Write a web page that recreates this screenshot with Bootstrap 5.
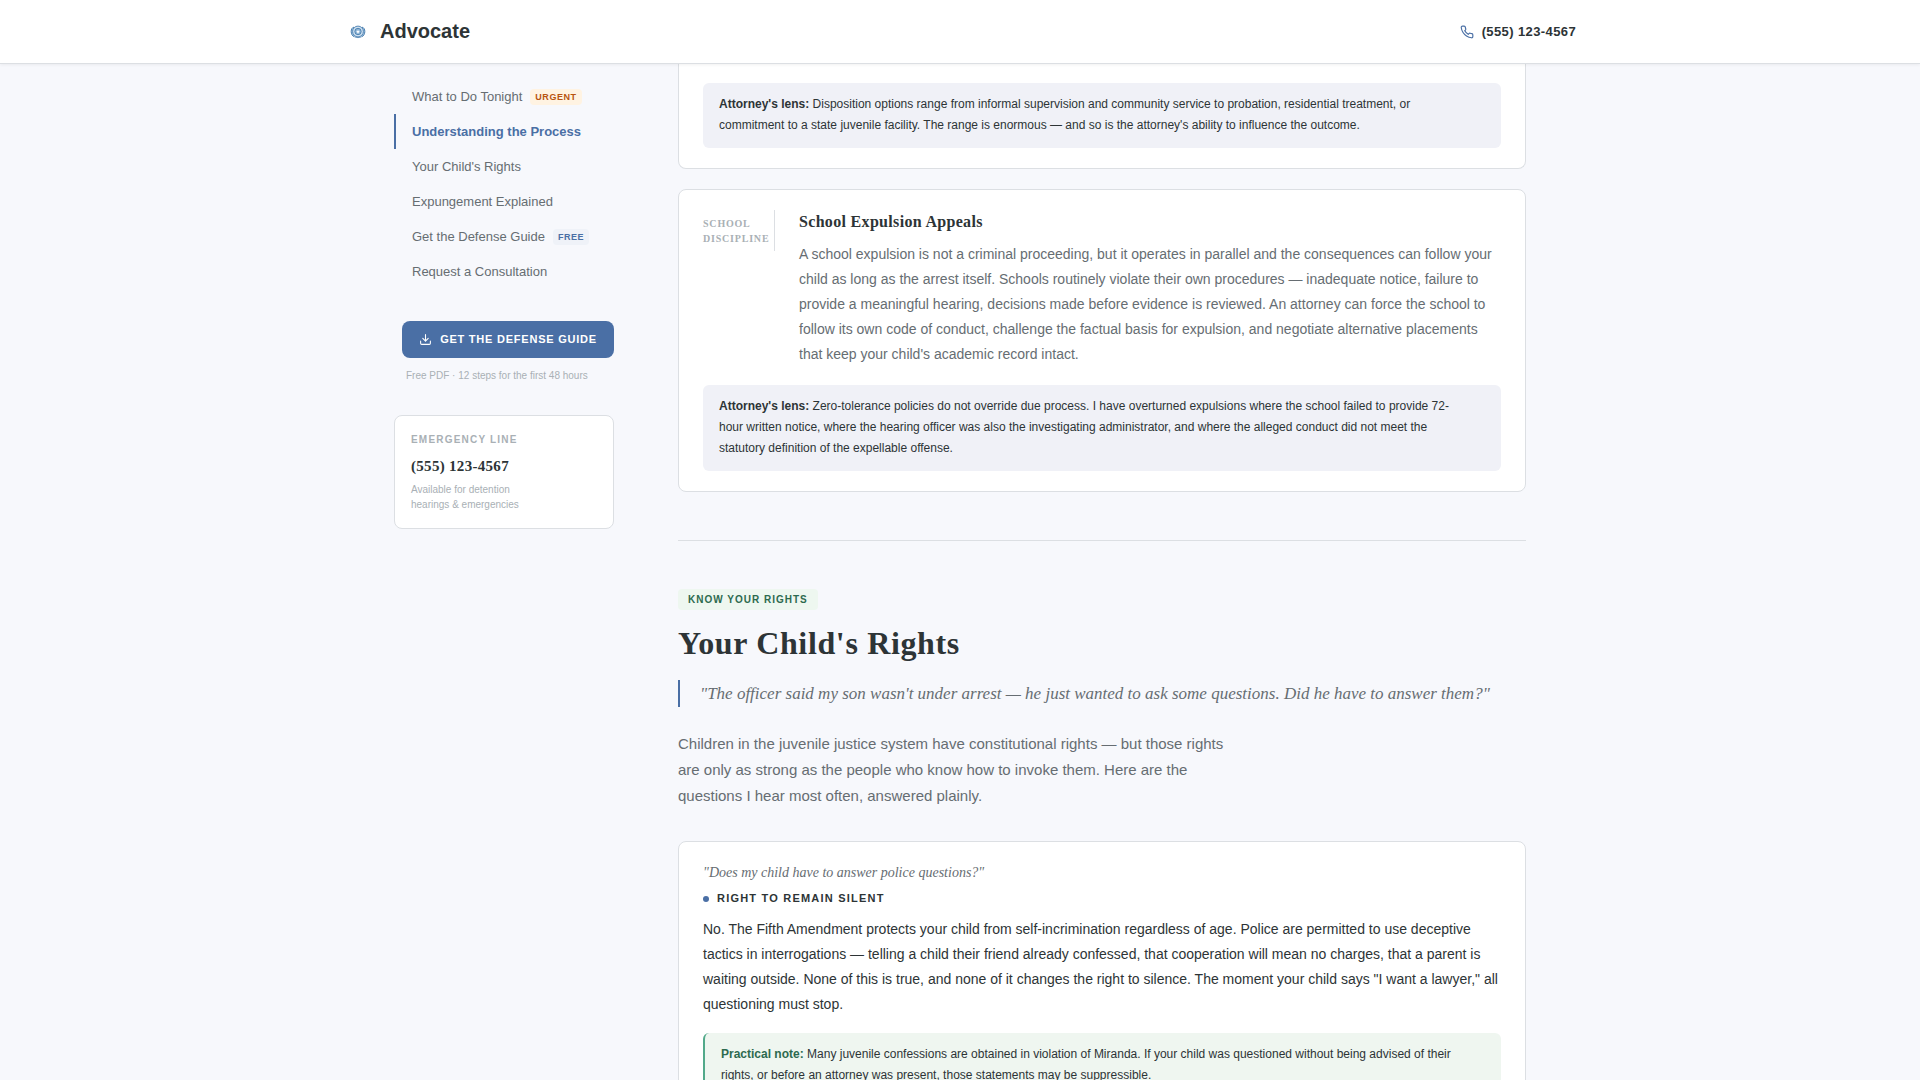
<!DOCTYPE html>
<html lang="en">
<head>
<meta charset="utf-8">
<meta name="viewport" content="width=device-width, initial-scale=1">
<title>Advocate</title>
<link href="https://cdn.jsdelivr.net/npm/bootstrap@5.3.0/dist/css/bootstrap.min.css" rel="stylesheet">
<style>
:root{--ink:#2d3436;--muted:#666d72;--faint:#a9b0b5;--blue:#4a6fa5;--line:#dcdfe3;--serif:"Liberation Serif","Times New Roman",serif}
body{background:#f7f8fc;color:var(--ink);font-family:"Liberation Sans",Arial,sans-serif;font-size:14px;line-height:25px}
.topbar{height:64px;background:#fff;border-bottom:1px solid var(--line);box-shadow:0 1px 3px rgba(0,0,0,.06)}
.topbar-inner{max-width:1280px}
.shell{max-width:1180px}
.brand{font-size:20px;font-weight:700}
.tel{font-size:13px;font-weight:700;letter-spacing:.03em}
a{color:inherit;text-decoration:none}
.side{width:220px;flex:none;padding-top:15px}
.side .nav-link{font-size:13px;line-height:19px;padding:8px 16px;border-left:2px solid transparent;color:var(--muted)}
.side .nav-link.active{border-color:var(--blue);color:var(--blue);font-weight:700}
.tag{font-size:9px;line-height:12px;font-weight:700;letter-spacing:.06em;padding:2px 5px;border-radius:4px}
.tag-urgent{background:#fff3e2;color:#b85410}
.tag-free{background:#eff2f8;color:var(--blue)}
.guide{margin:32px 0 0 8px;height:37px;background:var(--blue);color:#fff;font-size:11px;font-weight:700;letter-spacing:.07em;border-radius:8px;padding:0 16px}
.guide:hover{background:#3f6192;color:#fff}
.tiny{font-size:10px;line-height:15px;color:var(--faint)}
.guide-note{margin:10px 0 0 12px}
.panel{background:#fff;border:1px solid var(--line);border-radius:8px}
.hotline{margin-top:32px;padding:16px}
.eyebrow{font-size:10px;line-height:15px;font-weight:700;letter-spacing:.12em;color:var(--faint)}
.hotline-number{font:700 15px/24px var(--serif);letter-spacing:.02em;margin-top:7px}
.panel-body{padding:20px 24px}
.panel-cont{padding-top:19px}
.panel-gap{margin-top:20px}
.lens,.practical{font-size:12px;line-height:21px;padding:11px 16px 12px;border-radius:6px}
.lens{background:#f0f1f7}
.lens-gap{margin-top:18px}
.practical{background:#eff6f0;border-left:2px solid #52a98a}
.practical strong,.rights-tag{color:#2d6a4f}
.stage{width:72px;flex:none;align-self:flex-start;padding:6px 0 5px;border-right:1px solid var(--line);font:700 10px/15px var(--serif);letter-spacing:.08em;color:var(--faint)}
.panel h3{font:700 16px/24px var(--serif);letter-spacing:.02em}
.copy{color:var(--muted)}
.rule{border-top:1px solid var(--line);margin:48px 0}
.rights-tag{background:#eef7f0;font-size:10px;line-height:15px;font-weight:700;letter-spacing:.1em;padding:3px 10px;border-radius:4px}
h2{font:700 32px/42px var(--serif);letter-spacing:.02em;margin:12px 0 16px}
.pull{font:italic 17px/27px var(--serif);color:var(--muted);border-left:2px solid var(--blue);padding-left:20px}
.intro{font-size:15px;line-height:26px;color:var(--muted);max-width:560px;margin-bottom:32px}
.ask{font:italic 14px/22px var(--serif);color:var(--muted)}
.right-name{font-size:11px;line-height:17px;font-weight:700;letter-spacing:.11em;margin:6px 0 10px}
.dot{width:6px;height:6px;border-radius:50%;background:var(--blue)}
</style>
</head>
<body>
<header class="topbar sticky-top">
  <div class="topbar-inner container-fluid px-4 h-100 d-flex align-items-center justify-content-between">
    <a href="#" class="d-flex align-items-center gap-2">
      <svg width="28" height="28" viewBox="0 0 28 28" fill="none" stroke="#4a7fb0" aria-hidden="true">
        <path d="M10 9.200C6.200 9.500 6.200 17.500 10.300 18.700M18 9.200C21.800 9.500 21.800 17.500 17.700 18.700" fill="#a9c8e2"/>
        <circle cx="14" cy="13.500" r="5.400" fill="#cfe0ef" stroke-width=".9"/>
        <circle cx="14" cy="13.500" r="3.200" fill="#8fb5d6" stroke-width=".9"/>
        <path d="M12.800 13h2.400L14 15.200z" fill="#fff" stroke="#fff" stroke-width=".6"/>
        <path d="M10.500 18.700c2 1.200 5 1.200 7 0" stroke-width=".8"/>
      </svg>
      <span class="brand">Advocate</span>
    </a>
    <a href="tel:5551234567" class="tel d-flex align-items-center gap-2">
      <svg width="14" height="14" viewBox="0 0 24 24" fill="none" stroke="#4a6fa5" stroke-width="2" stroke-linecap="round" stroke-linejoin="round" aria-hidden="true"><path d="M22 16.920v3a2 2 0 0 1-2.180 2 19.790 19.790 0 0 1-8.630-3.070 19.500 19.500 0 0 1-6-6 19.790 19.790 0 0 1-3.070-8.670A2 2 0 0 1 4.110 2h3a2 2 0 0 1 2 1.720c.127.960.361 1.903.700 2.810a2 2 0 0 1-.450 2.110L8.090 9.910a16 16 0 0 0 6 6l1.270-1.270a2 2 0 0 1 2.110-.450c.907.339 1.850.573 2.810.700A2 2 0 0 1 22 16.920z"/></svg>
      (555) 123-4567
    </a>
  </div>
</header>

<div class="shell container-fluid px-4 d-flex">
  <aside class="side">
    <nav class="nav flex-column" aria-label="Guide sections">
      <a class="nav-link d-flex align-items-center gap-2" href="#tonight">What to Do Tonight <span class="tag tag-urgent">URGENT</span></a>
      <a class="nav-link active" aria-current="true" href="#process">Understanding the Process</a>
      <a class="nav-link" href="#rights">Your Child's Rights</a>
      <a class="nav-link" href="#expungement">Expungement Explained</a>
      <a class="nav-link d-flex align-items-center gap-2" href="#guide">Get the Defense Guide <span class="tag tag-free">FREE</span></a>
      <a class="nav-link" href="#consult">Request a Consultation</a>
    </nav>
    <div class="d-flex flex-column">
      <button type="button" class="guide btn border-0 d-flex align-items-center justify-content-center gap-2">
        <svg width="13" height="13" viewBox="0 0 24 24" fill="none" stroke="#fff" stroke-width="2" stroke-linecap="round" stroke-linejoin="round" aria-hidden="true"><path d="M21 15v4a2 2 0 0 1-2 2H5a2 2 0 0 1-2-2v-4M7 10l5 5 5-5M12 15V3"/></svg>
        GET THE DEFENSE GUIDE
      </button>
      <div class="tiny guide-note">Free PDF · 12 steps for the first 48 hours</div>
    </div>
    <div class="panel hotline">
      <div class="eyebrow">EMERGENCY LINE</div>
      <a class="hotline-number d-block" href="tel:5551234567">(555) 123-4567</a>
      <div class="tiny mt-1">Available for detention<br>hearings &amp; emergencies</div>
    </div>
  </aside>

  <main class="flex-grow-1 ms-5 ps-3">
    <article class="panel panel-body panel-cont border-top-0 rounded-top-0" id="process">
      <div class="lens"><strong>Attorney's lens:</strong> Disposition options range from informal supervision and community service to probation, residential treatment, or<br>commitment to a state juvenile facility. The range is enormous — and so is the attorney's ability to influence the outcome.</div>
    </article>

    <article class="panel panel-body panel-gap">
      <div class="d-flex gap-4">
        <div class="stage">SCHOOL<br>DISCIPLINE</div>
        <div>
          <h3 class="mb-2">School Expulsion Appeals</h3>
          <p class="copy mb-0">A school expulsion is not a criminal proceeding, but it operates in parallel and the consequences can follow your child as long as the arrest itself. Schools routinely violate their own procedures — inadequate notice, failure to provide a meaningful hearing, decisions made before evidence is reviewed. An attorney can force the school to follow its own code of conduct, challenge the factual basis for expulsion, and negotiate alternative placements that keep your child's academic record intact.</p>
        </div>
      </div>
      <div class="lens lens-gap"><strong>Attorney's lens:</strong> Zero-tolerance policies do not override due process. I have overturned expulsions where the school failed to provide 72-<br>hour written notice, where the hearing officer was also the investigating administrator, and where the alleged conduct did not meet the<br>statutory definition of the expellable offense.</div>
    </article>

    <div class="rule"></div>

    <section id="rights">
      <div class="d-flex"><span class="rights-tag">KNOW YOUR RIGHTS</span></div>
      <h2>Your Child's Rights</h2>
      <p class="pull mb-4">"The officer said my son wasn't under arrest — he just wanted to ask some questions. Did he have to answer them?"</p>
      <p class="intro">Children in the juvenile justice system have constitutional rights — but those rights are only as strong as the people who know how to invoke them. Here are the questions I hear most often, answered plainly.</p>
      <article class="panel panel-body">
        <div class="ask">"Does my child have to answer police questions?"</div>
        <div class="right-name d-flex align-items-center gap-2"><span class="dot"></span>RIGHT TO REMAIN SILENT</div>
        <p class="mb-3">No. The Fifth Amendment protects your child from self-incrimination regardless of age. Police are permitted to use deceptive tactics in interrogations — telling a child their friend already confessed, that cooperation will mean no charges, that a parent is waiting outside. None of this is true, and none of it changes the right to silence. The moment your child says "I want a lawyer," all questioning must stop.</p>
        <div class="practical"><strong>Practical note:</strong> Many juvenile confessions are obtained in violation of Miranda. If your child was questioned without being advised of their<br>rights, or before an attorney was present, those statements may be suppressible.</div>
      </article>
    </section>
  </main>
</div>
<script src="https://cdn.jsdelivr.net/npm/bootstrap@5.3.0/dist/js/bootstrap.bundle.min.js"></script>
</body>
</html>
